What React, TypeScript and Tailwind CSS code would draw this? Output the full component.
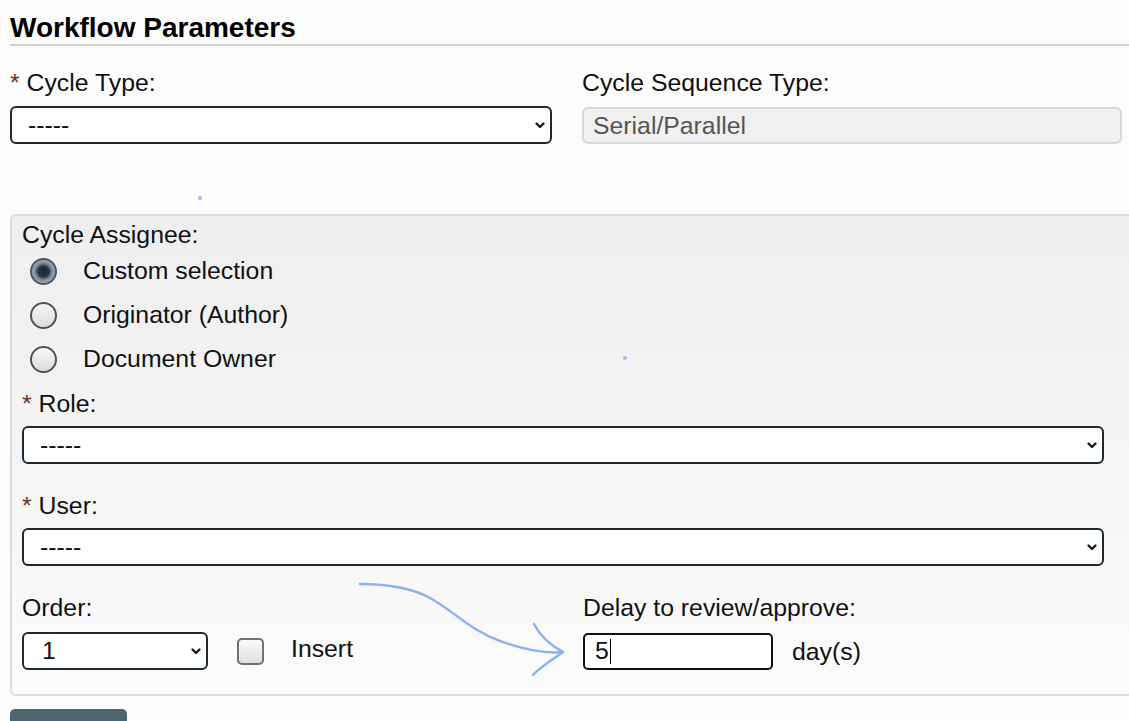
import React from 'react';

const Chevron = () => (
  <svg width="10" height="7" viewBox="0 0 10 7" className="shrink-0">
    <path d="M1.5 1.5 L5 5 L8.5 1.5" fill="none" stroke="#111" strokeWidth="2.2" strokeLinecap="round" strokeLinejoin="round" />
  </svg>
);

function FakeSelect({ value, className }: { value: string; className: string }) {
  return (
    <div
      className={`flex items-center justify-between h-[38px] border-2 border-[#1c2a35] rounded-[6px] bg-white pl-[16px] pr-[5px] ${className}`}
    >
      <span className="leading-none">{value}</span>
      <Chevron />
    </div>
  );
}

function Req({ children }: { children: React.ReactNode }) {
  return (
    <div className="leading-[28px]">
      <span className="text-[#6a3030]">*</span> {children}
    </div>
  );
}

function Radio({ checked, label }: { checked?: boolean; label: string }) {
  return (
    <div className="flex items-center h-[44px] pl-[8px]">
      {checked ? (
        <span className="w-[27px] h-[27px] rounded-full border-2 border-[#4a5860] bg-[radial-gradient(circle,#1b2930_0%,#24343d_32%,#7d8d96_52%,#c9d1d5_100%)]" />
      ) : (
        <span className="w-[27px] h-[27px] rounded-full border-2 border-[#4b5358] bg-[linear-gradient(180deg,#f7f7f7,#dcdcdc)]" />
      )}
      <span className="ml-[26px] leading-[28px]">{label}</span>
    </div>
  );
}

export default function App() {
  return (
    <div className="relative min-h-screen overflow-hidden bg-[#fcfcfc] text-[24.8px] text-[#111] font-['Liberation_Sans',Arial,sans-serif]">
      <div className="pl-[10px]">
        {/* ── Title ───────────────────────── */}
        <h2 className="text-[28px] leading-[31px] font-bold text-black pt-[12px] pb-[1px] border-b-2 border-[#d2d2d2]">
          Workflow Parameters
        </h2>

        {/* ── Top row ─────────────────────── */}
        <div className="flex gap-[30px] mt-[23px]">
          <div className="w-[542px]">
            <Req>Cycle Type:</Req>
            <FakeSelect value="-----" className="mt-[9px] w-[542px]" />
          </div>
          <div className="w-[540px]">
            <div className="leading-[28px]">Cycle Sequence Type:</div>
            <div className="mt-[10px] h-[37px] w-[540px] flex items-center border-2 border-[#d8d8d8] rounded-[6px] bg-[#f0f0f0] pl-[9px] text-[#555]">
              Serial/Parallel
            </div>
          </div>
        </div>

        {/* ── Assignee panel ──────────────── */}
        <div className="mt-[70px] w-[1160px] border-2 border-[#dcdcdc] rounded-[6px] bg-[linear-gradient(180deg,#eeeeee,#fbfbfb)] pt-[5px] pl-[10px] pb-[24px]">
          <div className="leading-[28px]">Cycle Assignee:</div>
          <Radio checked label="Custom selection" />
          <Radio label="Originator (Author)" />
          <Radio label="Document Owner" />

          <div className="mt-[9px]">
            <Req>Role:</Req>
            <FakeSelect value="-----" className="mt-[8px] w-[1082px]" />
          </div>

          <div className="mt-[28px]">
            <Req>User:</Req>
            <FakeSelect value="-----" className="mt-[8px] w-[1082px]" />
          </div>

          <div className="mt-[28px] flex">
            <div className="w-[561px]">
              <div className="leading-[28px]">Order:</div>
              <div className="mt-[10px] flex items-center">
                <div className="flex items-center justify-between h-[38px] w-[186px] border-2 border-[#1c2a35] rounded-[6px] bg-white pl-[18px] pr-[5px]">
                  <span className="leading-none">1</span>
                  <Chevron />
                </div>
                <span className="ml-[29px] w-[27px] h-[27px] rounded-[5px] border-2 border-[#6b7579] bg-[linear-gradient(180deg,#fafafa,#e0e0e0)]" />
                <span className="ml-[27px] leading-[28px] -mt-[4px]">Insert</span>
              </div>
            </div>
            <div>
              <div className="leading-[28px]">Delay to review/approve:</div>
              <div className="mt-[11px] flex items-center">
                <div className="h-[37px] w-[190px] flex items-center border-2 border-[#111] rounded-[5px] bg-white pl-[10px]">
                  <span className="leading-none">5</span>
                  <span className="ml-[1px] w-px h-[25px] bg-black" />
                </div>
                <span className="ml-[19px] leading-[28px]">day(s)</span>
              </div>
            </div>
          </div>
        </div>

        {/* ── Button stub ─────────────────── */}
        <div className="mt-[13px] w-[117px] h-[40px] bg-[#4e6470] rounded-t-[5px]" />
      </div>

      {/* ── Hand-drawn annotation ───────── */}
      <svg className="absolute inset-0 pointer-events-none" width="1129" height="721" viewBox="0 0 1129 721">
        <g fill="none" stroke="#8cb0f2" strokeWidth="2.4" strokeLinecap="round" strokeLinejoin="round">
          <path d="M360 584 C 385 584, 410 587, 430 598 C 455 612, 470 630, 500 641 C 525 650, 545 654, 563 652" />
          <path d="M534 624 C 540 636, 552 646, 563 652" />
          <path d="M563 652 C 552 660, 540 667, 533 675" />
        </g>
        <circle cx="200" cy="198" r="2" fill="#9fbaf3" />
        <circle cx="625" cy="358" r="2" fill="#9fbaf3" />
      </svg>
    </div>
  );
}
